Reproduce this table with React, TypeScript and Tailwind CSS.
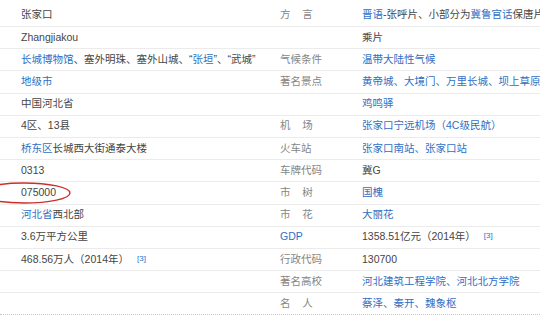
import type { ReactNode } from 'react'

const A = ({ children }: { children: ReactNode }) => (
  <span className="text-[#2f6fc3]">{children}</span>
)

const Sup = ({ n }: { n: number }) => (
  <sup className="ml-[8px] text-[8px] text-[#2f6fc3] relative -top-[2px]">[{n}]</sup>
)

type Row = { left?: ReactNode; label?: ReactNode; value?: ReactNode }

const rows: Row[] = [
  {
    left: '张家口',
    label: <>方&nbsp;&nbsp;&nbsp;&nbsp;言</>,
    value: (
      <>
        <A>晋语</A>-张呼片、小部分为<A>冀鲁官话</A>保唐片
      </>
    ),
  },
  { left: 'Zhangjiakou', value: '乘片' },
  {
    left: (
      <>
        <A>长城博物馆</A>、塞外明珠、塞外山城、“<A>张垣</A>”、“武城”
      </>
    ),
    label: '气候条件',
    value: <A>温带大陆性气候</A>,
  },
  {
    left: <A>地级市</A>,
    label: '著名景点',
    value: <A>黄帝城、大境门、万里长城、坝上草原</A>,
  },
  { left: '中国河北省', value: <A>鸡鸣驿</A> },
  {
    left: '4区、13县',
    label: <>机&nbsp;&nbsp;&nbsp;&nbsp;场</>,
    value: <A>张家口宁远机场（4C级民航）</A>,
  },
  {
    left: (
      <>
        <A>桥东区</A>长城西大街通泰大楼
      </>
    ),
    label: '火车站',
    value: <A>张家口南站、张家口站</A>,
  },
  { left: '0313', label: '车牌代码', value: '冀G' },
  { left: '075000', label: <>市&nbsp;&nbsp;&nbsp;&nbsp;树</>, value: <A>国槐</A> },
  {
    left: (
      <>
        <A>河北省</A>西北部
      </>
    ),
    label: <>市&nbsp;&nbsp;&nbsp;&nbsp;花</>,
    value: <A>大丽花</A>,
  },
  {
    left: '3.6万平方公里',
    label: <A>GDP</A>,
    value: (
      <>
        1358.51亿元（2014年）
        <Sup n={3} />
      </>
    ),
  },
  {
    left: (
      <>
        468.56万人（2014年）
        <Sup n={3} />
      </>
    ),
    label: '行政代码',
    value: '130700',
  },
  { label: '著名高校', value: <A>河北建筑工程学院、河北北方学院</A> },
  { label: <>名&nbsp;&nbsp;&nbsp;&nbsp;人</>, value: <A>蔡泽、秦开、魏象枢</A> },
]

export default function App() {
  return (
    <div
      className="relative w-[540px] h-[320px] overflow-hidden bg-white pt-[3px] text-[10.5px] text-[#454545]"
      style={{ fontFamily: '"Liberation Sans", "Noto Sans CJK SC", sans-serif' }}
    >
      {rows.map((r, i) => (
        <div
          key={i}
          className={`flex items-center whitespace-nowrap ${
            i === 0 ? 'h-[24px]' : 'h-[22.2px]'
          } ${
            i === rows.length - 1
              ? 'border-b border-dotted border-[#c8c8c8]'
              : 'border-b border-[#ebebeb]'
          }`}
        >
          <div className="w-[270px] shrink-0 pl-[21px]">{r.left}</div>
          <div className="w-[92px] shrink-0 pl-[10px] text-[#858585]">{r.label}</div>
          <div className="flex-1 min-w-0 overflow-hidden">{r.value}</div>
        </div>
      ))}

      <svg
        className="absolute left-0 top-0 pointer-events-none"
        width="540"
        height="320"
        viewBox="0 0 540 320"
      >
        <ellipse cx="24" cy="193" rx="46" ry="10" fill="none" stroke="#c9302c" strokeWidth="1.4" />
      </svg>
    </div>
  )
}
